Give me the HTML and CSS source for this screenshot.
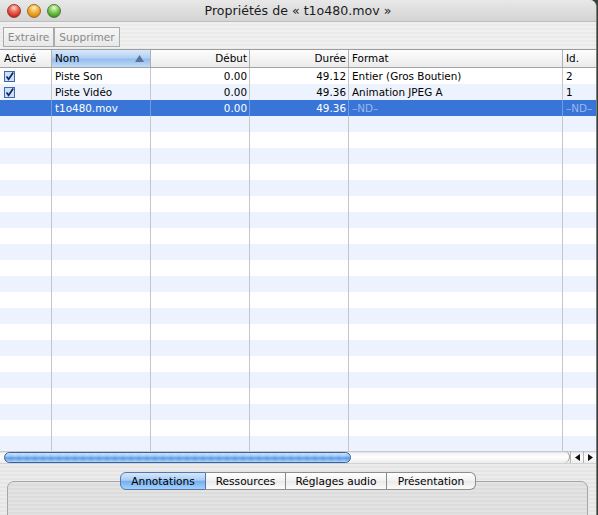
FILE: index.html
```html
<!DOCTYPE html>
<html lang="fr">
<head>
<meta charset="utf-8">
<title>Propriétés de « t1o480.mov »</title>
<link rel="stylesheet" href="styles.css">
</head>
<body>
<div class="window">
  <div class="titlebar">
    <div class="lights">
      <span class="light red"></span><span class="light yellow"></span><span class="light green"></span>
    </div>
    <div class="title">Propriétés de « t1o480.mov »</div>
    <div></div>
  </div>
  <div class="toolbar">
    <button class="btn btn-a">Extraire</button><button class="btn btn-b">Supprimer</button>
  </div>
  <div class="table">
    <div class="row head">
      <div class="c c1">Activé</div>
      <div class="c c2 sorted">Nom<svg class="sort" width="9" height="7" viewBox="0 0 9 7"><polygon points="4.5,0 9,7 0,7" fill="#5a7398"/></svg></div>
      <div class="c c3 num">Début</div>
      <div class="c c4 num">Durée</div>
      <div class="c c5">Format</div>
      <div class="c c6">Id.</div>
    </div>
    <div class="tbody">
      <div class="row">
        <div class="c c1"><svg class="chk" width="11" height="11" viewBox="0 0 11 11"><rect x="0.5" y="0.5" width="10" height="10" fill="#cfe0f6" stroke="#3f6aa8"/><path d="M2.5 5.5 L4.6 8.3 L9.2 1.6" fill="none" stroke="#0b2a66" stroke-width="1.7"/></svg></div>
        <div class="c c2">Piste Son</div>
        <div class="c c3 num">0.00</div>
        <div class="c c4 num">49.12</div>
        <div class="c c5">Entier (Gros Boutien)</div>
        <div class="c c6">2</div>
      </div>
      <div class="row">
        <div class="c c1"><svg class="chk" width="11" height="11" viewBox="0 0 11 11"><rect x="0.5" y="0.5" width="10" height="10" fill="#cfe0f6" stroke="#3f6aa8"/><path d="M2.5 5.5 L4.6 8.3 L9.2 1.6" fill="none" stroke="#0b2a66" stroke-width="1.7"/></svg></div>
        <div class="c c2">Piste Vidéo</div>
        <div class="c c3 num">0.00</div>
        <div class="c c4 num">49.36</div>
        <div class="c c5">Animation JPEG A</div>
        <div class="c c6">1</div>
      </div>
      <div class="row sel">
        <div class="c c1"></div>
        <div class="c c2">t1o480.mov</div>
        <div class="c c3 num">0.00</div>
        <div class="c c4 num">49.36</div>
        <div class="c c5 nd">–ND–</div>
        <div class="c c6 nd">–ND–</div>
      </div>
      <div class="row"><div class="c c1"></div><div class="c c2"></div><div class="c c3"></div><div class="c c4"></div><div class="c c5"></div><div class="c c6"></div></div>
      <div class="row"><div class="c c1"></div><div class="c c2"></div><div class="c c3"></div><div class="c c4"></div><div class="c c5"></div><div class="c c6"></div></div>
      <div class="row"><div class="c c1"></div><div class="c c2"></div><div class="c c3"></div><div class="c c4"></div><div class="c c5"></div><div class="c c6"></div></div>
      <div class="row"><div class="c c1"></div><div class="c c2"></div><div class="c c3"></div><div class="c c4"></div><div class="c c5"></div><div class="c c6"></div></div>
      <div class="row"><div class="c c1"></div><div class="c c2"></div><div class="c c3"></div><div class="c c4"></div><div class="c c5"></div><div class="c c6"></div></div>
      <div class="row"><div class="c c1"></div><div class="c c2"></div><div class="c c3"></div><div class="c c4"></div><div class="c c5"></div><div class="c c6"></div></div>
      <div class="row"><div class="c c1"></div><div class="c c2"></div><div class="c c3"></div><div class="c c4"></div><div class="c c5"></div><div class="c c6"></div></div>
      <div class="row"><div class="c c1"></div><div class="c c2"></div><div class="c c3"></div><div class="c c4"></div><div class="c c5"></div><div class="c c6"></div></div>
      <div class="row"><div class="c c1"></div><div class="c c2"></div><div class="c c3"></div><div class="c c4"></div><div class="c c5"></div><div class="c c6"></div></div>
      <div class="row"><div class="c c1"></div><div class="c c2"></div><div class="c c3"></div><div class="c c4"></div><div class="c c5"></div><div class="c c6"></div></div>
      <div class="row"><div class="c c1"></div><div class="c c2"></div><div class="c c3"></div><div class="c c4"></div><div class="c c5"></div><div class="c c6"></div></div>
      <div class="row"><div class="c c1"></div><div class="c c2"></div><div class="c c3"></div><div class="c c4"></div><div class="c c5"></div><div class="c c6"></div></div>
      <div class="row"><div class="c c1"></div><div class="c c2"></div><div class="c c3"></div><div class="c c4"></div><div class="c c5"></div><div class="c c6"></div></div>
      <div class="row"><div class="c c1"></div><div class="c c2"></div><div class="c c3"></div><div class="c c4"></div><div class="c c5"></div><div class="c c6"></div></div>
      <div class="row"><div class="c c1"></div><div class="c c2"></div><div class="c c3"></div><div class="c c4"></div><div class="c c5"></div><div class="c c6"></div></div>
      <div class="row"><div class="c c1"></div><div class="c c2"></div><div class="c c3"></div><div class="c c4"></div><div class="c c5"></div><div class="c c6"></div></div>
      <div class="row"><div class="c c1"></div><div class="c c2"></div><div class="c c3"></div><div class="c c4"></div><div class="c c5"></div><div class="c c6"></div></div>
      <div class="row"><div class="c c1"></div><div class="c c2"></div><div class="c c3"></div><div class="c c4"></div><div class="c c5"></div><div class="c c6"></div></div>
      <div class="row"><div class="c c1"></div><div class="c c2"></div><div class="c c3"></div><div class="c c4"></div><div class="c c5"></div><div class="c c6"></div></div>
      <div class="row"><div class="c c1"></div><div class="c c2"></div><div class="c c3"></div><div class="c c4"></div><div class="c c5"></div><div class="c c6"></div></div>
      <div class="row"><div class="c c1"></div><div class="c c2"></div><div class="c c3"></div><div class="c c4"></div><div class="c c5"></div><div class="c c6"></div></div>
    </div>
  </div>
  <div class="hscroll">
    <div class="track"><div class="thumb"></div></div>
    <div class="arrows">
      <span class="arr"><svg width="5" height="7" viewBox="0 0 5 7"><polygon points="0,3.5 5,0 5,7" fill="#111"/></svg></span>
      <span class="arr"><svg width="5" height="7" viewBox="0 0 5 7"><polygon points="5,3.5 0,0 0,7" fill="#111"/></svg></span>
    </div>
  </div>
  <div class="bottom">
    <div class="tabs">
      <div class="tab tab1 active">Annotations</div>
      <div class="tab tab2">Ressources</div>
      <div class="tab tab3">Réglages audio</div>
      <div class="tab tab4">Présentation</div>
    </div>
    <div class="tabbox"></div>
  </div>
</div>
</body>
</html>
```
FILE: styles.css
```css
* { box-sizing: border-box; margin: 0; padding: 0; }
body {
  background: #34443a;
  font-family: "DejaVu Sans", sans-serif;
  font-size: 10.4px;
  color: #000;
  overflow: hidden;
}
.window {
  width: 597px;
  height: 515px;
  overflow: hidden;
  background: #ececec;
  border-right: 1px solid #7b7b7b;
  border-top-right-radius: 7px;
  display: flex;
  flex-direction: column;
}
.titlebar {
  height: 22px;
  flex: none;
  display: grid;
  grid-template-columns: 1fr auto 1fr;
  align-items: center;
  background: linear-gradient(#e8e8e8, #d4d4d4);
  border-bottom: 1px solid #bdbdbd;
}
.lights { display: flex; gap: 6px; padding-left: 7px; }
.light {
  width: 14px;
  height: 14px;
  border-radius: 50%;
}
.red {
  background: radial-gradient(circle at 50% 25%, #ffd6cf 0, #f3705f 35%, #c9241a 80%, #8c1410 100%);
  border: 1px solid #8f3a33;
}
.yellow {
  background: radial-gradient(circle at 50% 25%, #fff0c8 0, #f7bb45 35%, #d8880c 80%, #9a5e06 100%);
  border: 1px solid #9a6b2a;
}
.green {
  background: radial-gradient(circle at 50% 25%, #e8ffd0 0, #8fd36a 35%, #3e9a1e 80%, #25660e 100%);
  border: 1px solid #4d7a38;
}
.title {
  font-size: 12.6px;
  color: #1b1b1b;
  line-height: 21px;
}
.toolbar {
  height: 28px;
  flex: none;
  display: flex;
  align-items: flex-start;
  padding: 5px 0 0 3px;
  background: repeating-linear-gradient(#f0f0f0 0 2px, #eaeaea 2px 4px);
  border-bottom: 1px solid #9c9c9c;
}
.btn {
  height: 20px;
  font-family: "DejaVu Sans", sans-serif;
  font-size: 10.6px;
  color: #8a8a8a;
  background: linear-gradient(#f6f6f6, #e8e8e8);
  border: 1px solid #aaaaaa;
}
.btn-a { width: 51px; }
.btn-b { width: 66px; }

.table { flex: none; background: #fff; }
.row {
  height: 16px;
  display: flex;
  line-height: 16px;
  white-space: nowrap;
}
.row.head {
  height: 18px;
  line-height: 17px;
  background: linear-gradient(#fdfdfd, #ebebeb);
  border-bottom: 1px solid #a3a3a3;
}
.tbody {
  height: 383px;
  overflow: hidden;
}
.tbody .row:nth-child(even) { background: #edf3fe; }
.tbody .row.sel { background: #3875d7; color: #fff; }
.c {
  height: 100%;
  border-right: 1px solid #c6c6c6;
  padding-left: 3px;
  overflow: hidden;
}
.head .c { border-right-color: #b0b0b0; }
.sel .c { border-right-color: #6f9be2; }
.c1 { width: 52px; padding-left: 4px; }
.c2 { width: 99px; }
.c3 { width: 99px; }
.c4 { width: 99px; }
.c5 { width: 214px; }
.c6 { flex: 1; border-right: none; }
.num { text-align: right; padding-left: 0; padding-right: 2px; }
.sorted {
  display: flex;
  justify-content: space-between;
  align-items: center;
  padding-right: 6px;
  background: linear-gradient(#d9e8fb 0, #b3d1f5 45%, #94bdee 55%, #c1dcf8 100%);
  border-right-color: #7f9fc8;
}
.sort { display: block; }
.chk { display: block; margin-top: 3px; }
.nd { color: #9ab9ec; }

.hscroll {
  height: 12px;
  flex: none;
  display: flex;
  background: linear-gradient(#bdbdbd 0, #f2f2f2 2px, #ffffff 6px, #ececec 100%);
}
.track {
  width: 570px;
  padding-left: 4px;
  border-right: 1px solid #9a9a9a;
  border-radius: 0 6px 6px 0;
}
.thumb {
  width: 347px;
  height: 11px;
  margin-top: 1px;
  border: 1px solid #34609f;
  border-radius: 6px;
  background:
    repeating-linear-gradient(90deg, rgba(255,255,255,0.08) 0 4px, rgba(255,255,255,0) 4px 8px),
    linear-gradient(#cfe3fa 0, #9cc6f3 35%, #5d98e4 55%, #7fb5f3 80%, #b0d6fa 100%);
}
.arrows {
  flex: 1;
  display: flex;
}
.arr {
  width: 13px;
  display: flex;
  align-items: center;
  justify-content: center;
  border-left: 1px solid #b5b5b5;
}

.bottom {
  flex: 1;
  padding-top: 8px;
  background: repeating-linear-gradient(#ececec 0 2px, #e5e5e5 2px 4px);
  border-top: 1px solid #d2d2d2;
}
.tabs {
  position: relative;
  z-index: 1;
  display: flex;
  justify-content: center;
  height: 18px;
}
.tab {
  height: 18px;
  line-height: 16px;
  font-size: 10.6px;
  text-align: center;
  border: 1px solid #8d8d8d;
  border-left: none;
  background: linear-gradient(#ffffff, #f1f1f1 50%, #e9e9e9 51%, #fbfbfb);
}
.tab1 { width: 86px; border-left: 1px solid #6a7fa0; border-radius: 6px 0 0 6px; }
.tab2 { width: 80px; }
.tab3 { width: 101px; }
.tab4 { width: 89px; border-radius: 0 6px 6px 0; }
.tab.active {
  border-color: #5478ab;
  background: linear-gradient(#d6e7fb 0, #a9cdf5 45%, #76aef0 52%, #a5d2fa 100%);
}
.tabbox {
  margin: -9px 8px 0 7px;
  height: 60px;
  border: 1px solid #a6a6a6;
  border-radius: 7px;
  background: repeating-linear-gradient(#e3e3e3 0 2px, #dcdcdc 2px 4px);
}
```
